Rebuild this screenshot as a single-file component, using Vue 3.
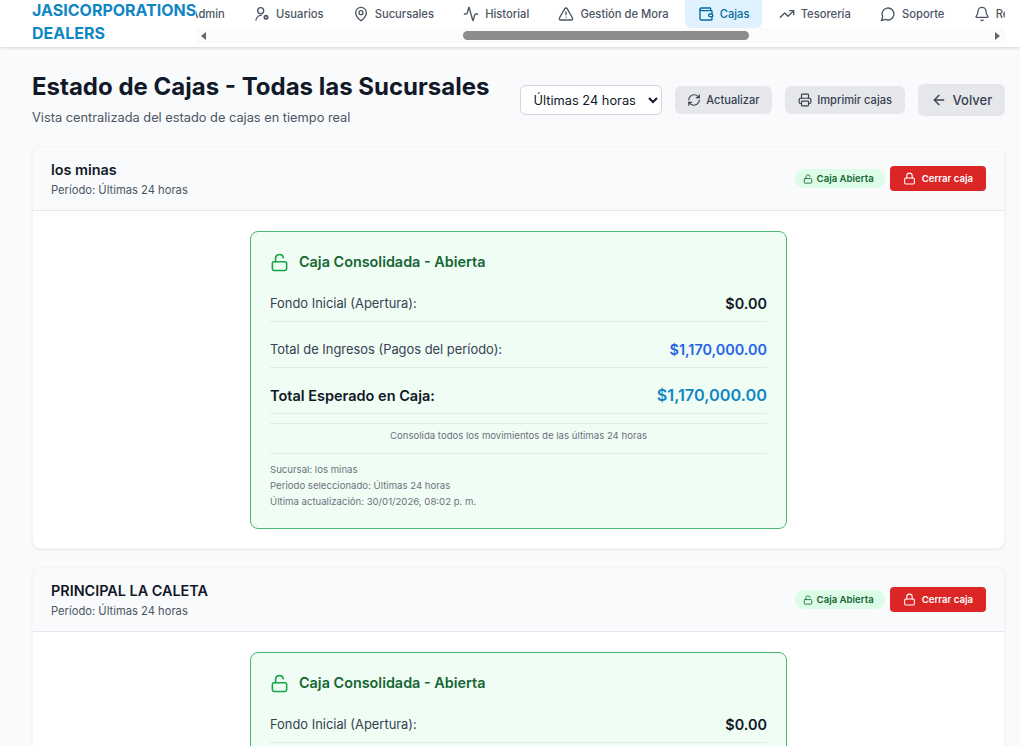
<template>
  <div class="page">
    <header class="topbar">
      <div class="brand">JASICORPORATIONS DEALERS</div>
      <div class="navwrap">
        <nav class="nav">
          <a v-for="item in navItems" :key="item.label" class="navitem" :class="{ active: item.label === 'Cajas' }">
            <svg class="navicon" viewBox="0 0 24 24" v-html="item.icon"></svg>
            <span>{{ item.label }}</span>
          </a>
        </nav>
        <div class="scrollbar">
          <span class="arrow left"></span>
          <div class="track"><div class="thumb"></div></div>
          <span class="arrow right"></span>
        </div>
      </div>
    </header>

    <main class="content">
      <section class="titlerow">
        <div class="titles">
          <h1>Estado de Cajas - Todas las Sucursales</h1>
          <p>Vista centralizada del estado de cajas en tiempo real</p>
        </div>
        <div class="actions">
          <select class="period">
            <option>Últimas 24 horas</option>
          </select>
          <button class="btn">
            <svg viewBox="0 0 24 24"><path d="M3 12a9 9 0 0 1 9-9 9.750 9.750 0 0 1 6.740 2.740L21 8" /><path d="M21 3v5h-5" /><path d="M21 12a9 9 0 0 1-9 9 9.750 9.750 0 0 1-6.740-2.740L3 16" /><path d="M8 16H3v5" /></svg>
            Actualizar
          </button>
          <button class="btn">
            <svg viewBox="0 0 24 24"><path d="M6 18H4a2 2 0 0 1-2-2v-5a2 2 0 0 1 2-2h16a2 2 0 0 1 2 2v5a2 2 0 0 1-2 2h-2" /><path d="M6 9V3a1 1 0 0 1 1-1h10a1 1 0 0 1 1 1v6" /><rect x="6" y="14" width="12" height="8" rx="1" /></svg>
            Imprimir cajas
          </button>
          <button class="btn back">
            <svg viewBox="0 0 24 24"><path d="m12 19-7-7 7-7" /><path d="M19 12H5" /></svg>
            Volver
          </button>
        </div>
      </section>

      <article v-for="branch in branches" :key="branch" class="card">
        <div class="cardhead">
          <div>
            <h2>{{ branch }}</h2>
            <p>Período: Últimas 24 horas</p>
          </div>
          <div class="headright">
            <span class="badge">
              <svg viewBox="0 0 24 24"><rect x="3" y="11" width="18" height="11" rx="2" /><path d="M7 11V7a5 5 0 0 1 9.900-1" /></svg>
              Caja Abierta
            </span>
            <button class="closebtn">
              <svg viewBox="0 0 24 24"><rect x="3" y="11" width="18" height="11" rx="2" /><path d="M7 11V7a5 5 0 0 1 10 0v4" /></svg>
              Cerrar caja
            </button>
          </div>
        </div>
        <div class="cardbody">
          <div class="summary">
            <div class="sumtitle">
              <svg viewBox="0 0 24 24"><rect x="3" y="11" width="18" height="11" rx="2" /><path d="M7 11V7a5 5 0 0 1 9.900-1" /></svg>
              <h3>Caja Consolidada - Abierta</h3>
            </div>
            <div class="row">
              <span>Fondo Inicial (Apertura):</span>
              <strong>$0.00</strong>
            </div>
            <div class="row">
              <span>Total de Ingresos (Pagos del período):</span>
              <strong class="blue">$1,170,000.00</strong>
            </div>
            <div class="row total">
              <span>Total Esperado en Caja:</span>
              <strong>$1,170,000.00</strong>
            </div>
            <div class="note">Consolida todos los movimientos de las últimas 24 horas</div>
            <div class="meta">
              <div>Sucursal: {{ branch }}</div>
              <div>Periodo seleccionado: Últimas 24 horas</div>
              <div>Última actualización: 30/01/2026, 08:02 p. m.</div>
            </div>
          </div>
        </div>
      </article>
    </main>
  </div>
</template>

<script setup>
const navItems = [
  { label: "Admin", icon: '<circle cx="12" cy="8" r="5"/><path d="M20 21a8 8 0 0 0-16 0"/>' },
  { label: "Usuarios", icon: '<path d="M3 21a8 8 0 0 1 8-7"/><circle cx="10" cy="7" r="4.500"/><circle cx="18" cy="17" r="2.500" stroke-width="2.600"/>' },
  { label: "Sucursales", icon: '<path d="M20 10c0 5-5.500 10.200-7.400 11.800a1 1 0 0 1-1.200 0C9.500 20.200 4 15 4 10a8 8 0 0 1 16 0"/><circle cx="12" cy="10" r="3"/>' },
  { label: "Historial", icon: '<path d="M22 12h-2.500a2 2 0 0 0-1.900 1.500l-2.400 8.300a.25.25 0 0 1-.5 0L9.200 2.200a.25.25 0 0 0-.5 0l-2.300 8.300A2 2 0 0 1 4.500 12H2"/>' },
  { label: "Gestión de Mora", icon: '<path d="m21.700 18-8-14a2 2 0 0 0-3.500 0l-8 14A2 2 0 0 0 4 21h16a2 2 0 0 0 1.700-3"/><path d="M12 9v4"/><path d="M12 17h.01"/>' },
  { label: "Cajas", icon: '<path d="M19 7V4a1 1 0 0 0-1-1H5a2 2 0 0 0 0 4h15a1 1 0 0 1 1 1v4h-3a2 2 0 0 0 0 4h3a1 1 0 0 0 1-1v-2"/><path d="M3 5v14a2 2 0 0 0 2 2h15a1 1 0 0 0 1-1v-4"/>' },
  { label: "Tesorería", icon: '<path d="M16 7h6v6"/><path d="m22 7-8.500 8.500-5-5L2 17"/>' },
  { label: "Soporte", icon: '<path d="M7.900 20A9 9 0 1 0 4 16.100L2 22Z"/>' },
  { label: "Reportes", icon: '<path d="M10.300 21a2 2 0 0 0 3.400 0"/><path d="M3.300 15.300A1 1 0 0 0 4 17h16a1 1 0 0 0 .7-1.700C19.400 14 18 12.500 18 8A6 6 0 0 0 6 8c0 4.500-1.400 6-2.700 7.300"/>' },
];

const branches = ["los minas", "PRINCIPAL LA CALETA"];
</script>

<style>
html,
body {
  margin: 0;
  height: 746px;
  overflow: hidden;
  background: #f9fafb;
}
</style>

<style scoped>
* {
  box-sizing: border-box;
}

svg {
  fill: none;
  stroke: currentColor;
  stroke-width: 2;
  stroke-linecap: round;
  stroke-linejoin: round;
  flex: none;
}

.page {
  width: 1020px;
  font-family: Inter, "Noto Sans", sans-serif;
  color: #111827;
}

.topbar {
  display: flex;
  height: 47px;
  padding-left: 32px;
  padding-right: 15px;
  background: #fff;
  box-shadow: 0 1px 3px rgba(0, 0, 0, 0.16);
  position: relative;
}

.brand {
  width: 164px;
  flex: none;
  font-size: 16px;
  font-weight: 700;
  line-height: 23px;
  color: #0f86c5;
  margin-top: -1px;
  position: relative;
  z-index: 1;
}

.navwrap {
  flex: 1;
  min-width: 0;
  overflow: hidden;
}

.nav {
  display: flex;
  gap: 4px;
  height: 28px;
  margin-left: -40px;
}

.navitem {
  display: flex;
  align-items: center;
  gap: 6px;
  flex: none;
  padding: 0 12.600px;
  border-radius: 0 0 6px 6px;
  font-size: 11.200px;
  font-weight: 500;
  color: #4b5563;
}

.navitem.active {
  background: #e0f2fe;
  color: #0369a1;
}

.navicon {
  width: 16px;
  height: 16px;
}

.scrollbar {
  display: flex;
  align-items: center;
  height: 15px;
  background: #fbfbfb;
}

.arrow {
  flex: none;
  width: 15px;
  display: flex;
  justify-content: center;
}

.arrow::before {
  content: "";
  border: 4px solid transparent;
}

.arrow.left::before {
  border-left-width: 0;
  border-right: 5px solid #666;
}

.arrow.right::before {
  border-right-width: 0;
  border-left: 5px solid #666;
}

.track {
  flex: 1;
}

.thumb {
  width: 286px;
  height: 9px;
  margin-left: 252px;
  border-radius: 5px;
  background: #8c8c8c;
}

.content {
  padding: 0 15px 0 32px;
}

.titlerow {
  display: flex;
  justify-content: space-between;
  align-items: flex-start;
  padding: 24px 0 18px;
}

h1 {
  margin: 0;
  font-size: 24px;
  line-height: 32px;
  font-weight: 700;
  color: #111827;
}

.titles p {
  margin: 5px 0 0;
  font-size: 12.800px;
  line-height: 20px;
  color: #4b5563;
}

.actions {
  display: flex;
  align-items: center;
  gap: 13px;
  margin-top: 13px;
}

.period {
  width: 142px;
  height: 30px;
  padding: 0 0 0 9px;
  border: 1px solid #d1d5db;
  border-radius: 6px;
  background: #fff;
  font: 12.800px Inter, sans-serif;
  color: #111827;
}

.btn {
  display: flex;
  align-items: center;
  gap: 5px;
  height: 28px;
  padding: 0 12.800px;
  border: 0;
  border-radius: 6px;
  background: #e5e7eb;
  font: 500 11.100px Inter, sans-serif;
  color: #374151;
}

.btn svg {
  width: 14px;
  height: 14px;
}

.btn.back {
  height: 32px;
  font-size: 13px;
  gap: 6px;
}

.btn.back svg {
  width: 16px;
  height: 16px;
}

.card {
  background: #fff;
  border: 1px solid #f3f4f6;
  border-radius: 8px;
  box-shadow: 0 1px 2px rgba(0, 0, 0, 0.08);
  margin-bottom: 18px;
}

.cardhead {
  display: flex;
  justify-content: space-between;
  align-items: center;
  height: 64px;
  padding: 0 18px;
  background: #f9fafb;
  border-bottom: 1px solid #e5e7eb;
  border-radius: 8px 8px 0 0;
}

h2 {
  margin: 0;
  font-size: 14.400px;
  line-height: 20px;
  font-weight: 600;
}

.cardhead p {
  margin: 2px 0 0;
  font-size: 11.200px;
  line-height: 16px;
  color: #4b5563;
}

.headright {
  display: flex;
  align-items: center;
  gap: 5px;
}

.badge {
  display: flex;
  align-items: center;
  gap: 4px;
  height: 19px;
  padding: 0 11px 0 8px;
  border-radius: 10px;
  background: #dcfce7;
  font-size: 9.600px;
  font-weight: 600;
  color: #166534;
}

.badge svg {
  width: 10px;
  height: 10px;
}

.closebtn {
  display: flex;
  align-items: center;
  gap: 6px;
  height: 25px;
  padding: 0 13px;
  border: 0;
  border-radius: 4px;
  background: #dc2626;
  font: 600 9.600px Inter, sans-serif;
  color: #fff;
}

.closebtn svg {
  width: 13px;
  height: 13px;
}

.cardbody {
  display: flex;
  justify-content: center;
  padding: 20px 0 19px;
}

.summary {
  width: 537px;
  padding: 18px 19px 18px;
  background: #f0fdf4;
  border: 1px solid #4ab96f;
  border-radius: 8px;
}

.sumtitle {
  display: flex;
  align-items: center;
  gap: 10px;
  color: #166534;
  margin-bottom: 2px;
}

.sumtitle svg {
  width: 19px;
  height: 19px;
  color: #16a34a;
}

h3 {
  margin: 0;
  font-size: 14.400px;
  line-height: 24px;
  font-weight: 600;
}

.row {
  display: flex;
  justify-content: space-between;
  align-items: center;
  height: 46px;
  padding-top: 9px;
  border-bottom: 1px solid #e5e7eb;
  font-size: 12.900px;
  color: #374151;
}

.row strong {
  font-size: 14.400px;
  font-weight: 600;
  color: #111827;
}

.row strong.blue {
  color: #2563eb;
}

.row.total span {
  font-size: 14.500px;
  font-weight: 600;
  color: #111827;
}

.row.total strong {
  font-size: 16.300px;
  color: #0f86c5;
}

.note {
  margin-top: 9px;
  padding: 5px 0 10px;
  border-top: 1px solid #e5e7eb;
  border-bottom: 1px solid #e5e7eb;
  font-size: 9.600px;
  line-height: 14px;
  text-align: center;
  color: #6b7280;
}

.meta {
  margin-top: 8px;
  font-size: 9.600px;
  line-height: 16px;
  color: #6b7280;
}
</style>
